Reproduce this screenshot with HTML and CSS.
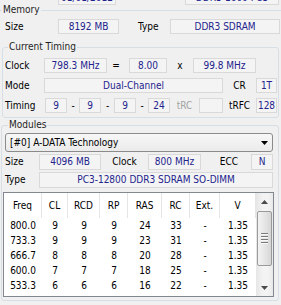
FILE: index.html
```html
<!DOCTYPE html>
<html>
<head>
<meta charset="utf-8">
<link rel="stylesheet" href="styles.css">
</head>
<body>
<div class="top-row">
  <div class="field top-a">01/01/2012</div>
  <div class="field top-b">DDR3-1600 PC3</div>
</div>

<section class="group memory">
  <span class="group-title mem-title">Memory</span>
  <div class="row mem-size-row">
    <span class="label mem-size-label">Size</span>
    <span class="field mem-size">8192 MB</span>
    <span class="label mem-type-label">Type</span>
    <span class="field mem-type">DDR3 SDRAM</span>
  </div>

  <section class="group timing">
    <span class="group-title timing-title">Current Timing</span>
    <div class="row">
      <span class="label row-label">Clock</span>
      <span class="field w-clock">798.3 MHz</span>
      <span class="op op-eq">=</span>
      <span class="field w-mult">8.00</span>
      <span class="op op-x">x</span>
      <span class="field w-clock">99.8 MHz</span>
    </div>
    <div class="row">
      <span class="label row-label">Mode</span>
      <span class="field w-mode">Dual-Channel</span>
      <span class="label right-label">CR</span>
      <span class="field w-small">1T</span>
    </div>
    <div class="row">
      <span class="label row-label timing-label">Timing</span>
      <span class="field w-t">9</span>
      <span class="op dash">-</span>
      <span class="field w-t">9</span>
      <span class="op dash dash-wide">-</span>
      <span class="field w-t">9</span>
      <span class="op dash">-</span>
      <span class="field w-t">24</span>
      <span class="label trc-label">tRC</span>
      <span class="field w-trc"></span>
      <span class="label right-label">tRFC</span>
      <span class="field w-small">128</span>
    </div>
  </section>
</section>

<section class="group modules">
  <span class="group-title mod-title">Modules</span>
  <div class="combo">
    <span>[#0] A-DATA Technology</span>
    <svg class="combo-arrow" width="7" height="4" viewBox="0 0 7 4"><path d="M0 0H7L3.5 4Z" fill="#000"/></svg>
  </div>
  <div class="row mod-row">
    <span class="label mod-label">Size</span>
    <span class="field mod-size">4096 MB</span>
    <span class="label mod-clock-label">Clock</span>
    <span class="field mod-clock">800 MHz</span>
    <span class="label mod-ecc-label">ECC</span>
    <span class="field mod-ecc">N</span>
  </div>
  <div class="row mod-row">
    <span class="label mod-label">Type</span>
    <span class="field mod-type">PC3-12800 DDR3 SDRAM SO-DIMM</span>
  </div>

  <div class="list">
    <span class="th">Freq</span><span class="th">CL</span><span class="th">RCD</span><span class="th">RP</span><span class="th">RAS</span><span class="th">RC</span><span class="th">Ext.</span><span class="th">V</span>
    <div class="scrollbar">
      <div class="sb-btn">
        <svg width="7" height="4" viewBox="0 0 7 4"><path d="M0 4H7L3.5 0Z" fill="#4a4a4a"/></svg>
      </div>
      <div class="sb-track">
        <div class="sb-thumb">
          <span class="grip"></span><span class="grip"></span><span class="grip"></span><span class="grip"></span>
        </div>
      </div>
      <div class="sb-btn">
        <svg width="7" height="4" viewBox="0 0 7 4"><path d="M0 0H7L3.5 4Z" fill="#4a4a4a"/></svg>
      </div>
    </div>
    <span class="td">800.0</span><span class="td">9</span><span class="td">9</span><span class="td">9</span><span class="td">24</span><span class="td">33</span><span class="td">-</span><span class="td">1.35</span>
    <span class="td">733.3</span><span class="td">9</span><span class="td">9</span><span class="td">9</span><span class="td">23</span><span class="td">31</span><span class="td">-</span><span class="td">1.35</span>
    <span class="td">666.7</span><span class="td">8</span><span class="td">8</span><span class="td">8</span><span class="td">20</span><span class="td">28</span><span class="td">-</span><span class="td">1.35</span>
    <span class="td">600.0</span><span class="td">7</span><span class="td">7</span><span class="td">7</span><span class="td">18</span><span class="td">25</span><span class="td">-</span><span class="td">1.35</span>
    <span class="td">533.3</span><span class="td">6</span><span class="td">6</span><span class="td">6</span><span class="td">16</span><span class="td">22</span><span class="td">-</span><span class="td">1.35</span>
  </div>
</section>
</body>
</html>
```

FILE: styles.css
```css
html, body {
  margin: 0;
  padding: 0;
}

body {
  width: 281px;
  height: 305px;
  overflow: hidden;
  background: #f0f0f0;
  color: #000;
  font-family: "DejaVu Sans Condensed", "DejaVu Sans", "Liberation Sans", sans-serif;
  font-stretch: condensed;
  font-size: 10px;
  line-height: 12px;
}

.field {
  box-sizing: border-box;
  display: flex;
  align-items: center;
  justify-content: center;
  border: 1px solid #d9d9d9;
  background: #f4f4f4;
  color: #23238c;
  white-space: nowrap;
  overflow: hidden;
}

.label {
  display: flex;
  align-items: center;
  white-space: nowrap;
}

.op {
  display: flex;
  align-items: center;
  justify-content: center;
}

.row {
  display: flex;
  height: 15px;
}

/* top partial row */
.top-row {
  display: flex;
  align-items: flex-end;
  height: 5px;
  overflow: hidden;
}

.top-row .field {
  flex: none;
  height: 15px;
}

.top-a {
  width: 58px;
  margin-left: 58px;
}

.top-b {
  width: 94px;
  margin-left: 69px;
}

/* group boxes */
.group {
  position: relative;
  box-sizing: border-box;
  border: 1px solid #d5dfe5;
  border-radius: 3px;
}

.group-title {
  position: absolute;
  top: -7px;
  padding: 0 1px;
  background: #f0f0f0;
  line-height: 12px;
  color: #1e1e1e;
}

.memory {
  margin: 5px 0 0 -3px;
  width: 287px;
  padding: 8px 0 0 7px;
  border-bottom: 0;
  border-radius: 3px 3px 0 0;
}

.mem-title {
  left: 4px;
}

.mem-size-label {
  width: 53px;
}

.mem-size {
  width: 61px;
}

.mem-type-label {
  width: 32px;
  margin-left: 19px;
}

.mem-type {
  width: 110px;
}

/* current timing */
.timing {
  margin: 13px 0 0 -3px;
  width: 277px;
  padding: 10px 1px 4px 2px;
  display: flex;
  flex-direction: column;
  gap: 5px;
}

.timing-title {
  left: 5px;
}

.row-label {
  width: 39px;
}

.timing-label {
  width: 40px;
}

.w-clock {
  width: 63px;
}

.op-eq {
  width: 22px;
  padding-right: 4px;
  box-sizing: border-box;
}

.w-mult {
  width: 38px;
}

.op-x {
  width: 26px;
}

.w-mode {
  width: 179px;
}

.right-label {
  width: 33px;
  justify-content: center;
}

.w-small {
  width: 21px;
}

.w-t {
  width: 22px;
}

.dash {
  width: 12px;
}

.dash-wide {
  width: 13px;
}

.trc-label {
  width: 29px;
  justify-content: center;
  color: #a3a3a3;
}

.w-trc {
  width: 24px;
}

/* modules */
.modules {
  margin: 7px 0 0 1px;
  width: 278px;
  padding: 7px 0 3px 3px;
}

.mod-title {
  left: 6px;
}

.combo {
  box-sizing: border-box;
  display: flex;
  align-items: center;
  justify-content: space-between;
  width: 268px;
  height: 19px;
  padding: 0 4px 0 4px;
  border: 1px solid #8b8b8b;
  border-radius: 3px;
  background: linear-gradient(#f7f7f7, #ebebeb);
}

.mod-row {
  margin-top: 2px;
  height: 16px;
}

.mod-row .field {
  height: 16px;
}

.mod-label {
  width: 34px;
}

.mod-size {
  width: 62px;
}

.mod-clock-label {
  width: 47px;
  justify-content: center;
}

.mod-clock {
  width: 53px;
}

.mod-ecc-label {
  width: 50px;
  padding-left: 6px;
  box-sizing: border-box;
  justify-content: center;
}

.mod-ecc {
  width: 22px;
}

.mod-type {
  width: 234px;
}

/* list */
.list {
  box-sizing: border-box;
  display: grid;
  grid-template-columns: 38px 26px 32px 28px 34px 28px 30px 36px 17px;
  grid-template-rows: 25px repeat(5, 15px) 1fr;
  width: 271px;
  height: 105px;
  margin: 4px 0 0 -2px;
  border: 1px solid #828790;
  background: #fff;
}

.th {
  display: flex;
  align-items: center;
  justify-content: center;
  border-right: 1px solid #e5e5e5;
}

.td {
  display: flex;
  align-items: center;
  justify-content: center;
}

.scrollbar {
  grid-column: 9;
  grid-row: 1 / -1;
  display: flex;
  flex-direction: column;
  background: linear-gradient(90deg, #e6e6e6, #f3f3f3 40%, #f3f3f3 70%, #e9e9e9);
}

.sb-btn {
  height: 17px;
  display: flex;
  align-items: center;
  justify-content: center;
  flex: none;
}

.sb-track {
  flex: 1;
  padding: 1px 1px 0 1px;
}

.sb-thumb {
  box-sizing: border-box;
  height: 55px;
  border: 1px solid #9a9a9a;
  border-radius: 2px;
  background: linear-gradient(90deg, #f3f3f3, #e6e6e6 50%, #d6d6d6);
  display: flex;
  flex-direction: column;
  align-items: center;
  justify-content: center;
  gap: 1px;
}

.grip {
  width: 7px;
  height: 1px;
  background: #7a7a7a;
  box-shadow: 0 1px 0 #f8f8f8;
  margin-bottom: 1px;
}
```
